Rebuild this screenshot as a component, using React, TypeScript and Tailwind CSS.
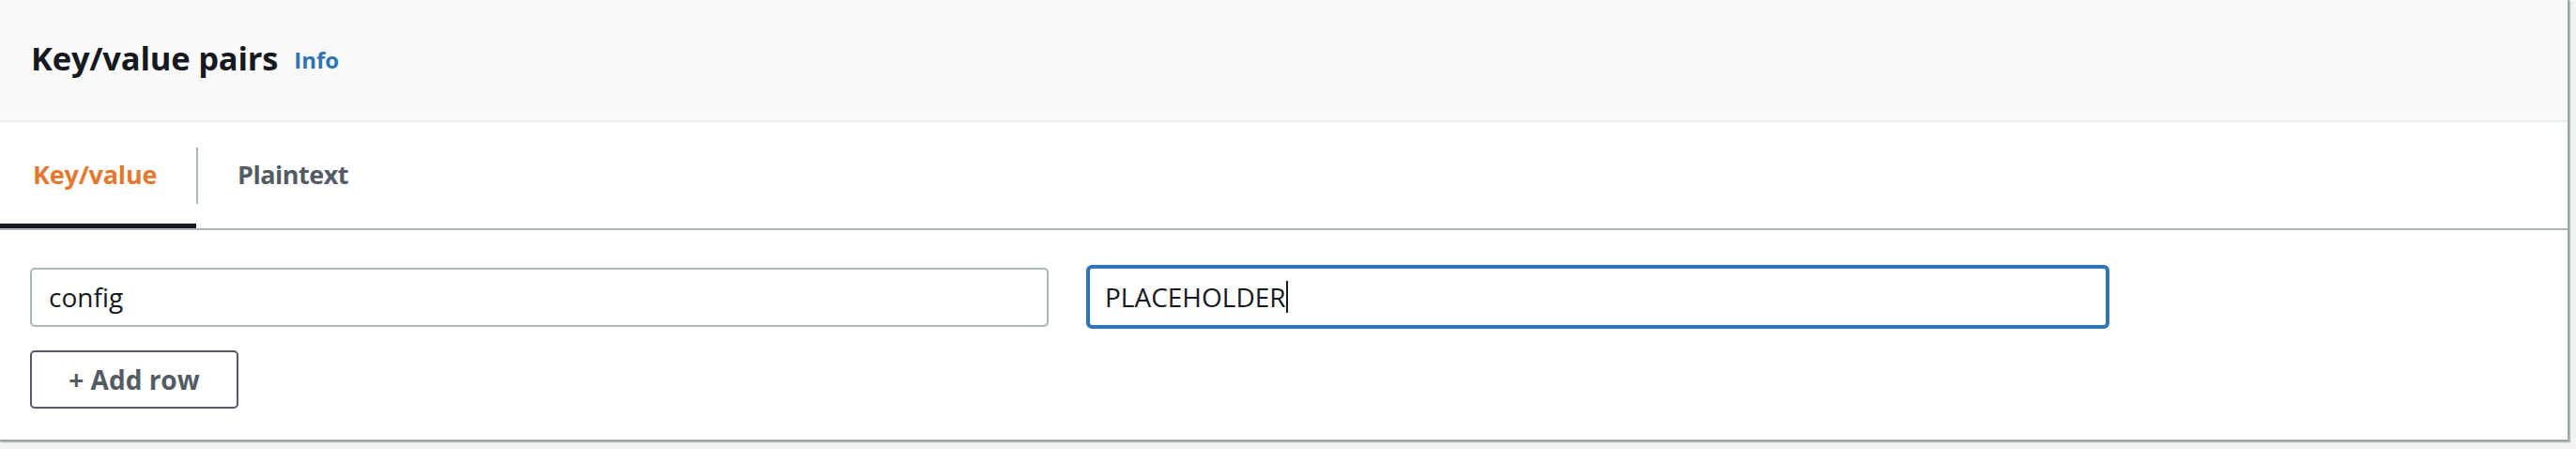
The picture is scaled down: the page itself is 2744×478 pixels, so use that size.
import React, { useState } from 'react';

const font = { fontFamily: '"Open Sans", "Noto Sans", sans-serif' };

type Tab = 'kv' | 'plain';

export default function App() {
  const [tab, setTab] = useState<Tab>('kv');

  return (
    <div className="w-full h-[478px] bg-[#f2f3f3]" style={font}>
      <div className="w-[2737px] bg-white border-r-2 border-b-2 border-[#9aa6a8] shadow-[1px_1px_1px_0_rgba(0,28,36,0.25)]">
        {/* header */}
        <div className="h-[130px] bg-[#fafafa] border-b-2 border-[#eaeded] flex items-center pl-[33px] pb-[4px]">
          <h2 className="text-[34.5px] leading-none font-bold text-[#16191f] tracking-[-0.2px]">Key/value pairs</h2>
          <a className="ml-[17px] mt-[4px] text-[24px] leading-none font-bold text-[#2f73b9]">Info</a>
        </div>

        {/* tabs */}
        <div className="h-[115px] flex items-stretch border-b-2 border-[#aab7b8]">
          <button
            onClick={() => setTab('kv')}
            className={
              'relative w-[209px] pl-[35px] text-left text-[27px] tracking-[-0.2px] font-bold ' +
              (tab === 'kv' ? 'text-[#e5772e]' : 'text-[#545b64]')
            }
          >
            Key/value
            {tab === 'kv' && <span className="absolute left-0 right-0 bottom-0 h-[5px] bg-[#16191f]" />}
          </button>
          <div className="self-center w-[2px] h-[60px] bg-[#aab7b8]" />
          <button
            onClick={() => setTab('plain')}
            className={
              'relative pl-[42px] pr-[40px] text-left text-[27px] tracking-[-0.5px] font-bold ' +
              (tab === 'plain' ? 'text-[#e5772e]' : 'text-[#545b64]')
            }
          >
            Plaintext
            {tab === 'plain' && <span className="absolute left-0 right-0 bottom-0 h-[5px] bg-[#16191f]" />}
          </button>
        </div>

        {/* rows */}
        <div className="pl-[32px] pt-[37px] pb-[33px]">
          <div className="flex items-center gap-[40px]">
            <div className="w-[1085px] h-[63px] border-2 border-[#aab7b8] rounded-[5px] flex items-center pl-[18px] text-[28px] text-[#16191f]">
              config
            </div>
            <div className="w-[1090px] h-[68px] border-[4px] border-[#3274b8] rounded-[6px] flex items-center pl-[16px] text-[28px] text-[#16191f]">
              PLACEHOLDER
              <span className="inline-block w-[2px] h-[34px] bg-[#16191f]" />
            </div>
          </div>
          <button className="mt-[23px] w-[222px] h-[62px] border-2 border-[#545b64] rounded-[5px] text-[28px] font-bold text-[#545b64]">
            + Add row
          </button>
        </div>
      </div>
    </div>
  );
}
